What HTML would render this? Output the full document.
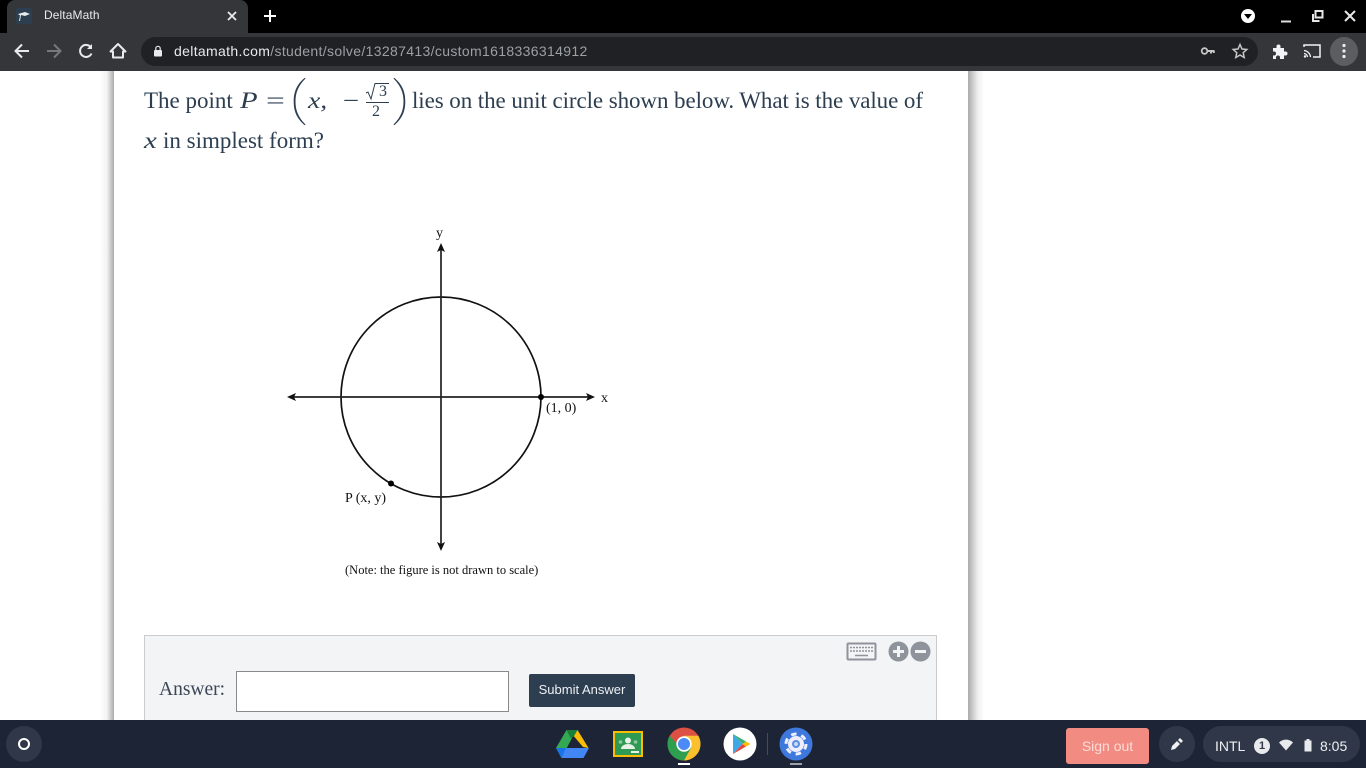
<!DOCTYPE html>
<html><head><meta charset="utf-8"><title>DeltaMath</title>
<style>
html,body{margin:0;padding:0;width:1366px;height:768px;overflow:hidden;background:#fff}
div,span,svg{position:absolute}
.t{white-space:nowrap;line-height:1}
.s{font-family:"Liberation Serif",serif}
.g{font-family:"Liberation Sans",sans-serif}
.q{font-family:"Liberation Serif",serif;font-size:23px;color:#2c3e50}
.m{font-style:italic;transform-origin:0 0}
</style></head><body>
<!-- page -->
<div style="left:100px;top:71px;width:14px;height:649px;background:linear-gradient(90deg,#fff,#f2f2f2 50%,#aaa)"></div>
<div style="left:968px;top:71px;width:16px;height:649px;background:linear-gradient(90deg,#aaa,#eee 60%,#fff)"></div>

<span class="t q" style="left:144px;top:89px">The point</span>
<span class="t q m" style="left:240px;top:89px;transform:scaleX(1.25)">P</span>
<span class="t q m" style="left:266px;top:89px;font-style:normal;transform:scaleX(1.45)">=</span>
<svg style="left:290px;top:74px" width="120" height="56" viewBox="290 74 120 56"><path d="M305.500 78.500C298 86 295.500 93 295.500 101.500S298 117 305.500 124.500L304.800 125.200C296 118 293.700 110 293.700 101.500S296 85 304.800 77.800zM393.500 78.500C401 86 403.500 93 403.500 101.500S401 117 393.500 124.500L394.200 125.200C403 118 405.300 110 405.300 101.500S403 85 394.200 77.800z" fill="#2c3e50"/></svg>
<span class="t q m" style="left:308px;top:89px;transform:scaleX(1.2)">x,</span>
<span class="t q m" style="left:343px;top:89px;font-style:normal;transform:scaleX(1.25)">−</span>
<span class="t s" style="left:379px;top:84px;font-size:16px;color:#2c3e50">3</span>
<svg style="left:364px;top:82px" width="26" height="20" viewBox="0 0 26 20"><path d="M2 11l2-1 3 7 4-15.500h14" fill="none" stroke="#2c3e50" stroke-width="1"/></svg>
<div style="left:366px;top:102px;width:23px;height:1px;background:#2c3e50"></div>
<span class="t s" style="left:372px;top:104px;font-size:16px;color:#2c3e50">2</span>
<span class="t q" style="left:412px;top:89px;letter-spacing:-.08px">lies on the unit circle shown below. What is the value of</span>
<span class="t q m" style="left:144px;top:129px;transform:scaleX(1.25)">x</span>
<span class="t q" style="left:163px;top:129px">in simplest form?</span>

<svg style="left:280px;top:220px" width="340" height="340" viewBox="280 220 340 340">
<circle cx="441" cy="397" r="100" fill="none" stroke="#111" stroke-width="1.700"/>
<path d="M290 397H592M441 246V548" stroke="#222" stroke-width="1.700" fill="none"/>
<path d="M287 397l9-4-2 4 2 4zM595 397l-9-4 2 4-2 4zM441 243l-4 9 4-2 4 2zM441 551l-4-9 4 2 4-2z" fill="#111"/>
<circle cx="541" cy="397" r="3" fill="#000"/>
<circle cx="391" cy="483.500" r="3" fill="#000"/>
</svg>
<span class="t s" style="left:436px;top:227px;font-size:14px;color:#111">y</span>
<span class="t s" style="left:601px;top:392px;font-size:14px;color:#111">x</span>
<span class="t s" style="left:546px;top:402px;font-size:14px;color:#111">(1, 0)</span>
<span class="t s" style="left:345px;top:492px;font-size:14px;color:#111">P (x, y)</span>
<span class="t s" style="left:345px;top:564px;font-size:12.500px;color:#111">(Note: the figure is not drawn to scale)</span>

<!-- answer -->
<div style="left:144px;top:635px;width:791px;height:90px;background:#f2f4f6;border:1px solid #ccc"></div>
<svg style="left:846px;top:642px" width="32" height="20" viewBox="0 0 32 20">
<rect x="1.500" y="1.500" width="28" height="16" rx="1" fill="#f2f4f6" stroke="#8f939b" stroke-width="2"/>
<path d="M4 5.500h23M4 9h23" stroke="#8f939b" stroke-width="1.500" stroke-dasharray="2 1"/>
<path d="M9 13.500h13" stroke="#8f939b" stroke-width="1.500"/>
</svg>
<svg style="left:887px;top:640px" width="46" height="24" viewBox="0 0 46 24">
<circle cx="11.500" cy="11.500" r="10" fill="#8f939b"/><circle cx="33.500" cy="11.500" r="10" fill="#8f939b"/>
<path d="M6 11.500h11M11.500 6v11M28 11.500h11" stroke="#f2f4f6" stroke-width="3"/>
</svg>
<span class="t s" style="left:159px;top:680px;font-size:19.500px;color:#3b4656">Answer:</span>
<div style="left:236px;top:671px;width:271px;height:39px;background:#fff;border:1px solid #8a8a8a"></div>
<div class="t g" style="left:529px;top:674px;width:106px;height:33px;background:#2c3e50;border-radius:2px;color:#eef1f4;font-size:13px;line-height:32px;text-align:center">Submit Answer</div>

<!-- chrome -->
<div style="left:0;top:0;width:1366px;height:33px;background:#000"></div>
<div style="left:0;top:33px;width:1366px;height:38px;background:#35363a"></div>
<div style="left:7px;top:0;width:241px;height:33px;background:#35363a;border-radius:8px 8px 0 0"></div>
<div style="left:16px;top:8px;width:16px;height:16px;background:#2c3e50;border-radius:2px"></div>
<svg style="left:16px;top:8px" width="16" height="16" viewBox="0 0 16 16"><path d="M2 6l7-2 5 2-5 2-4-1-1 6H3l1-5.500z" fill="#e8eaed"/></svg>
<span class="t g" style="left:44px;top:9px;font-size:12px;color:#e8eaed;letter-spacing:.1px">DeltaMath</span>
<svg style="left:224px;top:8px" width="16" height="16" viewBox="0 0 16 16"><path d="M4 4l8 8M12 4l-8 8" stroke="#e8eaed" stroke-width="1.800"/></svg>
<svg style="left:261px;top:7px" width="18" height="18" viewBox="0 0 18 18"><path d="M9 3v12M3 9h12" stroke="#fff" stroke-width="2"/></svg>
<svg style="left:1238px;top:6px" width="20" height="20" viewBox="0 0 20 20"><circle cx="10" cy="10" r="7" fill="#fff"/><path d="M6 8h8l-4 5z" fill="#000"/></svg>
<svg style="left:1276px;top:8px" width="20" height="18" viewBox="0 0 20 18"><path d="M5 13.500h10" stroke="#ddd" stroke-width="2"/></svg>
<svg style="left:1310px;top:8px" width="16" height="16" viewBox="0 0 16 16"><path d="M5.500 3h7v6.500h-7zM3 6v7h6.500" fill="none" stroke="#e8e8e8" stroke-width="2"/></svg>
<svg style="left:1342px;top:8px" width="16" height="16" viewBox="0 0 16 16"><path d="M3 3l10 10M13 3L3 13" stroke="#e8e8e8" stroke-width="2"/></svg>

<svg style="left:12px;top:41px" width="20" height="20" viewBox="0 0 20 20"><path d="M17 10H4M10 3.500L3.500 10l6.500 6.500" fill="none" stroke="#e8eaed" stroke-width="2"/></svg>
<svg style="left:44px;top:41px" width="20" height="20" viewBox="0 0 20 20"><path d="M3 10h13M10 3.500l6.500 6.500-6.500 6.500" fill="none" stroke="#77787a" stroke-width="2"/></svg>
<svg style="left:76px;top:41px" width="20" height="20" viewBox="0 0 20 20"><path d="M15.500 12.500a6 6 0 1 1-.5-6" fill="none" stroke="#e8eaed" stroke-width="2"/><path d="M16 3v5h-5z" fill="#e8eaed"/></svg>
<svg style="left:108px;top:41px" width="20" height="20" viewBox="0 0 20 20"><path d="M10 3l7.500 7.500H15v6H5v-6H2.500z" fill="none" stroke="#e8eaed" stroke-width="2" stroke-linejoin="round"/></svg>
<div style="left:141px;top:37px;width:1117px;height:29px;background:#202124;border-radius:15px"></div>
<svg style="left:152px;top:45px" width="12" height="12" viewBox="0 0 12 12"><rect x="2" y="5" width="8" height="6.500" rx="1" fill="#e8eaed"/><path d="M3.800 5V3.500a2.200 2.200 0 0 1 4.400 0V5" fill="none" stroke="#e8eaed" stroke-width="1.200"/></svg>
<span class="t g" style="left:174px;top:44px;font-size:14px;color:#e8eaed;letter-spacing:.34px">deltamath.com<span style="position:static;color:#9aa0a6">/student/solve/13287413/custom1618336314912</span></span>
<svg style="left:1200px;top:43px" width="16" height="16" viewBox="0 0 16 16"><circle cx="4.500" cy="8" r="2.800" fill="none" stroke="#c4c7c5" stroke-width="1.800"/><path d="M7 8h7.500M11 8v2.500M13.800 8v2" stroke="#c4c7c5" stroke-width="2"/></svg>
<svg style="left:1231px;top:42px" width="18" height="18" viewBox="0 0 18 18"><path d="M9 2.500l2 4.500 4.800.5-3.600 3.200 1 4.800L9 13l-4.200 2.500 1-4.800L2.200 7.500 7 7z" fill="none" stroke="#c4c7c5" stroke-width="1.500"/></svg>
<svg style="left:1271px;top:43px" width="17" height="17" viewBox="0 0 17 17"><path d="M2 5h3.500V3.500a2 2 0 0 1 4 0V5H13v3.500h1.500a2 2 0 0 1 0 4H13V16H9v-1.500a2 2 0 0 0-4 0V16H2v-3.500h1a2 2 0 0 0 0-4H2z" fill="#f1f3f4"/></svg>
<svg style="left:1303px;top:43px" width="18" height="16" viewBox="0 0 18 16"><path d="M1 4V2h16v12h-7" fill="none" stroke="#f1f3f4" stroke-width="1.500"/><path d="M1 7.500a7 7 0 0 1 6.500 6.500M1 10.500a4 4 0 0 1 3.500 3.500" fill="none" stroke="#f1f3f4" stroke-width="1.300"/><circle cx="2" cy="13.500" r="1.200" fill="#f1f3f4"/></svg>
<div style="left:1330px;top:37px;width:28px;height:29px;background:#5c5d60;border-radius:50%"></div>
<svg style="left:1342px;top:43px" width="4" height="16" viewBox="0 0 4 16"><circle cx="2" cy="2.500" r="1.600" fill="#eee"/><circle cx="2" cy="8" r="1.600" fill="#eee"/><circle cx="2" cy="13.500" r="1.600" fill="#eee"/></svg>

<!-- shelf -->
<div style="left:0;top:720px;width:1366px;height:48px;background:#1c2436"></div>
<div style="left:6px;top:726px;width:36px;height:36px;border-radius:50%;background:#2f3748"></div>
<div style="left:18px;top:738px;width:8px;height:8px;border:2px solid #fff;border-radius:50%"></div>

<svg style="left:555px;top:728px" width="34" height="32" viewBox="0 0 34 32">
<path d="M11.500 2h11L33.500 20l-5.500-1L17 6z" fill="#fbbc04"/>
<path d="M11.500 2L1 20l5.500 10L17 10z" fill="#34a853"/>
<path d="M11.500 2h11l-4 7-3 1z" fill="#188038"/>
<path d="M9 20h25l-5.500 10H6.500z" fill="#4285f4"/>
<path d="M1 20h10l-4.500 10z" fill="#1a73e8"/>
</svg>
<svg style="left:612px;top:730px" width="32" height="28" viewBox="0 0 32 28">
<rect x="1" y="1" width="30" height="26" fill="#fbbc04"/><rect x="3" y="3" width="26" height="22" fill="#2e9a54"/>
<circle cx="16" cy="10.500" r="3" fill="#e8f0e8"/><path d="M9 19a7 5 0 0 1 14 0z" fill="#e8f0e8"/>
<circle cx="8.500" cy="12" r="1.800" fill="#8fc9a0"/><circle cx="23.500" cy="12" r="1.800" fill="#8fc9a0"/>
<rect x="19" y="21" width="8" height="2" fill="#e8f0e8"/>
</svg>
<svg style="left:667px;top:727px" width="34" height="34" viewBox="0 0 34 34">
<circle cx="17" cy="17" r="16.500" fill="#dd5044"/>
<path d="M17 33.500A16.500 16.500 0 0 0 31.300 8.750H17z" fill="#fbc02d"/>
<path d="M2.700 8.750A16.500 16.500 0 0 0 17 33.500l7-12.500-7-4-7 0z" fill="#2e9e4f"/>
<circle cx="17" cy="17" r="7.700" fill="#fff"/><circle cx="17" cy="17" r="6" fill="#4c8bf5"/>
</svg>
<div style="left:678px;top:763px;width:12px;height:2px;background:#fff"></div>
<svg style="left:723px;top:727px" width="34" height="34" viewBox="0 0 34 34">
<circle cx="17" cy="17" r="16.500" fill="#fff"/>
<path d="M10 7l9.500 10L10 27z" fill="#3fa9e8"/>
<path d="M10 7l13 7.500-3.500 2.500z" fill="#3bb273"/>
<path d="M10 27l13-7.500-3.500-2.500z" fill="#e8453c"/>
<path d="M23 14.500l4.500 2.500-4.500 2.500-3.500-2.500z" fill="#fbbc04"/>
</svg>
<div style="left:767px;top:733px;width:1px;height:22px;background:#454c5c"></div>
<svg style="left:779px;top:727px" width="34" height="34" viewBox="0 0 34 34">
<circle cx="17" cy="17" r="16.500" fill="#3f78dc"/>
<circle cx="17" cy="17" r="8" fill="#eef"/>
<circle cx="17" cy="17" r="10" fill="none" stroke="#eef" stroke-width="3" stroke-dasharray="5.500 4.970"/>
<circle cx="17" cy="17" r="4" fill="#5d8fe0"/>
<circle cx="17" cy="17" r="2" fill="#c9d8f5"/>
</svg>
<div style="left:790px;top:763px;width:12px;height:2px;background:#9aa0a6"></div>

<div class="t g" style="left:1066px;top:728px;width:83px;height:36px;background:#f28b82;border-radius:3px;color:#fbdcd8;font-size:14px;line-height:36px;text-align:center">Sign out</div>
<div style="left:1159px;top:726px;width:36px;height:36px;border-radius:50%;background:#2f3748"></div>
<svg style="left:1169px;top:736px" width="16" height="16" viewBox="0 0 16 16"><path d="M2 14l1-4 5-5 3 3-5 5zM9 4l2-2 3 3-2 2z" fill="#eef0f2"/></svg>
<div style="left:1203px;top:726px;width:157px;height:36px;border-radius:18px;background:#2f3748"></div>
<span class="t g" style="left:1215px;top:739px;font-size:14px;color:#eef0f2">INTL</span>
<div class="t g" style="left:1254px;top:738px;width:16px;height:16px;border-radius:50%;background:#e8eaed;color:#2f3748;font-size:11px;line-height:16px;text-align:center;font-weight:bold">1</div>
<svg style="left:1278px;top:738px" width="16" height="14" viewBox="0 0 16 14"><path d="M1 4.500a10 10 0 0 1 14 0L8 12.500z" fill="#e8eaed"/></svg>
<svg style="left:1303px;top:738px" width="10" height="15" viewBox="0 0 10 15"><path d="M3.500 1h3v1.500H8.500v11h-7v-11h2z" fill="#e8eaed"/></svg>
<span class="t g" style="left:1320px;top:739px;font-size:14px;color:#eef0f2">8:05</span>
</body></html>
